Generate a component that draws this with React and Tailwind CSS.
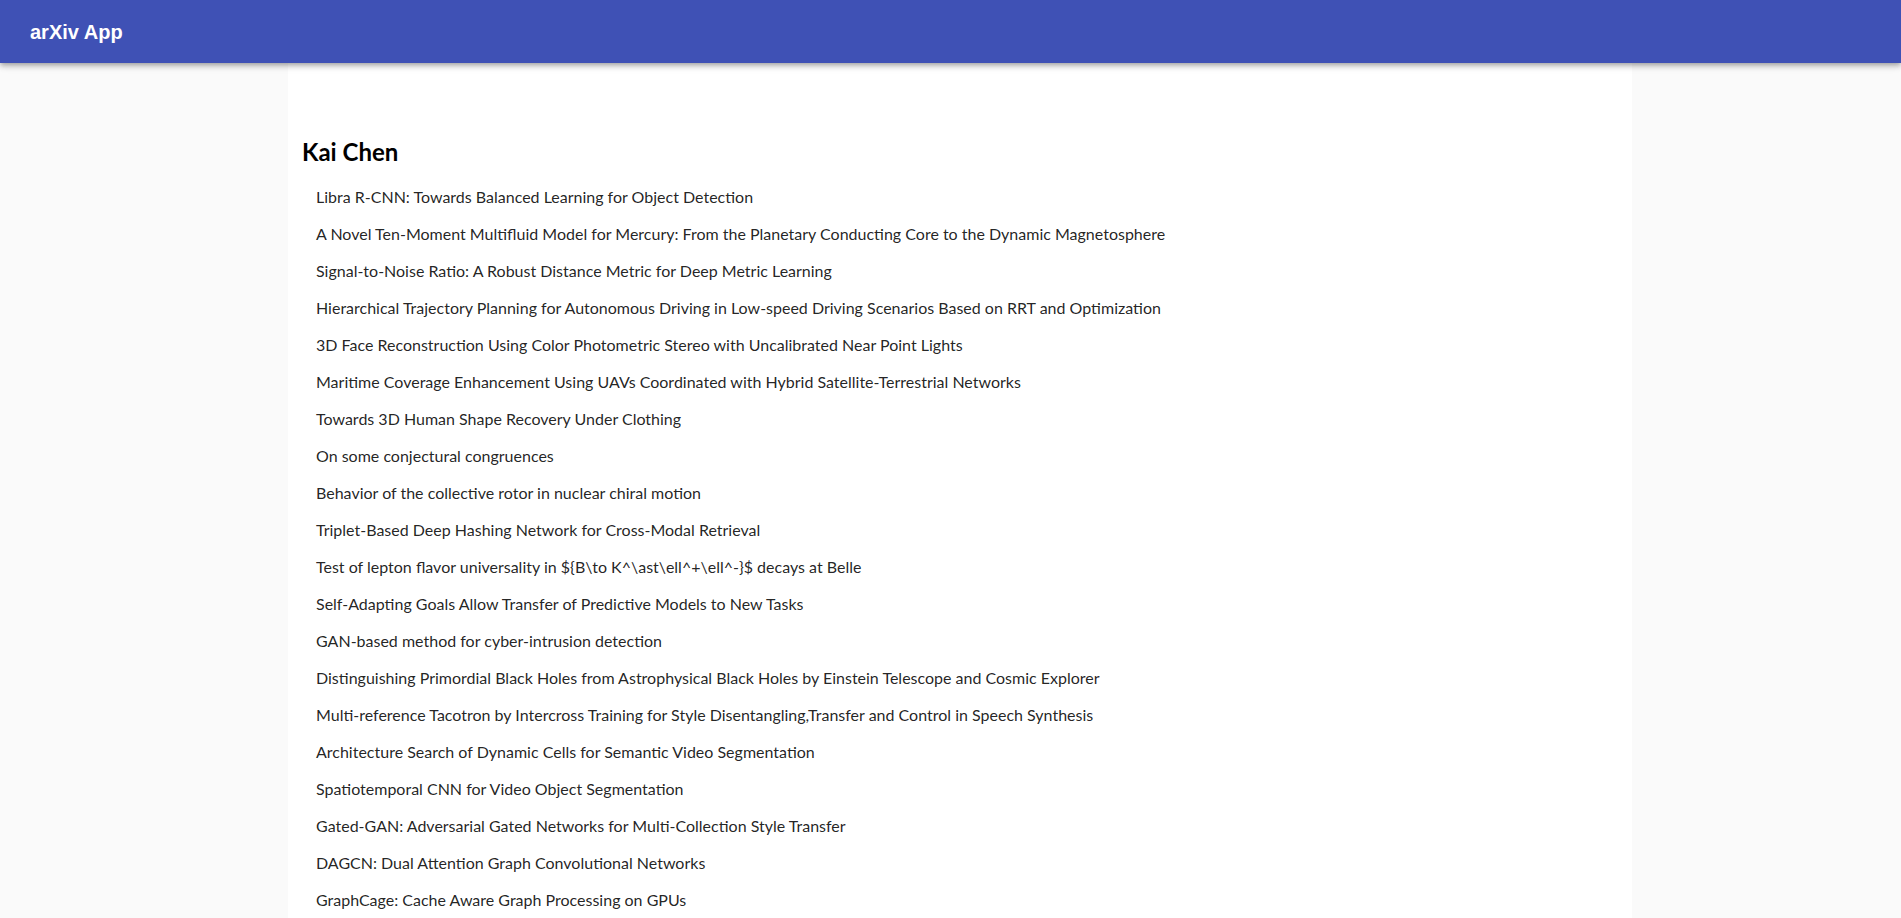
const papers = [
  'Libra R-CNN: Towards Balanced Learning for Object Detection',
  'A Novel Ten-Moment Multifluid Model for Mercury: From the Planetary Conducting Core to the Dynamic Magnetosphere',
  'Signal-to-Noise Ratio: A Robust Distance Metric for Deep Metric Learning',
  'Hierarchical Trajectory Planning for Autonomous Driving in Low-speed Driving Scenarios Based on RRT and Optimization',
  '3D Face Reconstruction Using Color Photometric Stereo with Uncalibrated Near Point Lights',
  'Maritime Coverage Enhancement Using UAVs Coordinated with Hybrid Satellite-Terrestrial Networks',
  'Towards 3D Human Shape Recovery Under Clothing',
  'On some conjectural congruences',
  'Behavior of the collective rotor in nuclear chiral motion',
  'Triplet-Based Deep Hashing Network for Cross-Modal Retrieval',
  'Test of lepton flavor universality in ${B\\to K^\\ast\\ell^+\\ell^-}$ decays at Belle',
  'Self-Adapting Goals Allow Transfer of Predictive Models to New Tasks',
  'GAN-based method for cyber-intrusion detection',
  'Distinguishing Primordial Black Holes from Astrophysical Black Holes by Einstein Telescope and Cosmic Explorer',
  'Multi-reference Tacotron by Intercross Training for Style Disentangling,Transfer and Control in Speech Synthesis',
  'Architecture Search of Dynamic Cells for Semantic Video Segmentation',
  'Spatiotemporal CNN for Video Object Segmentation',
  'Gated-GAN: Adversarial Gated Networks for Multi-Collection Style Transfer',
  'DAGCN: Dual Attention Graph Convolutional Networks',
  'GraphCage: Cache Aware Graph Processing on GPUs',
];

export default function App() {
  return (
    <div className="min-h-screen bg-[#fafafa] font-['Lato','Noto_Sans',sans-serif]">
      {/* App bar */}
      <header className="sticky top-0 z-10 h-[63px] bg-[#3f51b5] px-[30px] flex items-center shadow-[0_2px_4px_-1px_rgba(0,0,0,0.2),0_4px_5px_0_rgba(0,0,0,0.14),0_1px_10px_0_rgba(0,0,0,0.12)]">
        <h1 className="text-white text-[20px] font-bold font-['Liberation_Sans',Arial,sans-serif]">arXiv App</h1>
      </header>

      <main className="ml-[288px] w-[1344px] bg-white min-h-[855px] px-[14px] pt-[74px]">
        <h2 className="text-[24px] leading-[30px] font-bold text-black">Kai Chen</h2>
        <ul className="mt-[11px]">
          {papers.map((t, i) => (
            <li key={i} className="h-[37px] leading-[37px] pl-[14px] text-[16px] text-[rgba(0,0,0,0.87)] whitespace-nowrap">
              {t}
            </li>
          ))}
        </ul>
      </main>
    </div>
  );
}
